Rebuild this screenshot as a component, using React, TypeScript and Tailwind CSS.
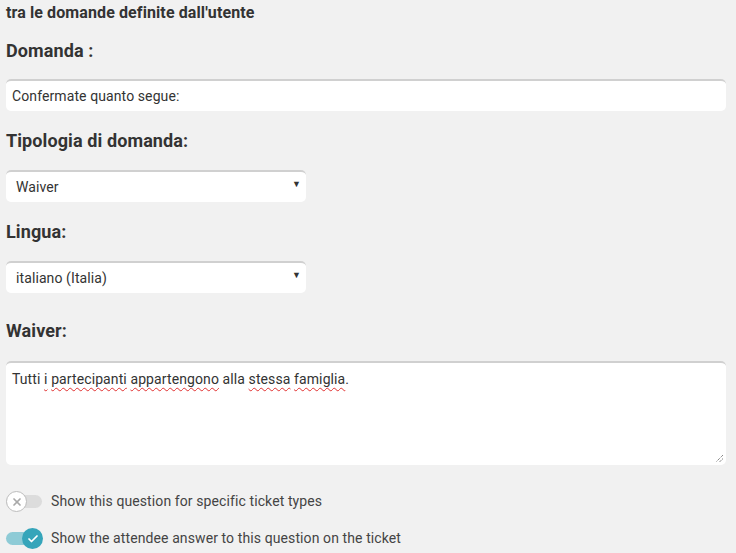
import React from 'react'
import { Check, X } from 'lucide-react'

const font = { fontFamily: 'Roboto, "Liberation Sans", sans-serif' }

const Label: React.FC<{ children: React.ReactNode; className?: string }> = ({ children, className }) => (
  <div className={`h-6 leading-6 text-[18px] font-bold text-[#333] ${className || ''}`}>{children}</div>
)

const SelectBox: React.FC<{ value: string; className?: string }> = ({ value, className }) => (
  <div
    className={`relative w-[300px] h-[32px] bg-white rounded-[5px] border-t-2 border-[#d0d0d0] flex items-center pl-[10px] text-[14px] text-[#333] ${className || ''}`}
  >
    {value}
    <span className="absolute right-[5px] top-[6px] text-[9px] text-[#333]">▼</span>
  </div>
)

const Wavy: React.FC<{ children: React.ReactNode }> = ({ children }) => (
  <span className="underline decoration-wavy decoration-[#e03030] decoration-1 underline-offset-[3px]">{children}</span>
)

const App: React.FC = () => {
  return (
    <div className="w-[736px] h-[553px] bg-[#f1f1f1] overflow-hidden px-[6px] pt-px tracking-[0.1px]" style={font}>
      <div className="h-6 leading-6 text-[16px] font-bold text-[#333]">tra le domande definite dall'utente</div>

      <Label className="mt-[14px]">Domanda :</Label>
      <div className="mt-[16px] w-[720px] h-[32px] bg-white rounded-[5px] border-t-2 border-[#d0d0d0] flex items-center pl-[6px] text-[14px] text-[#333]">
        Confermate quanto segue:
      </div>

      <Label className="mt-[18px]">Tipologia di domanda:</Label>
      <SelectBox value="Waiver" className="mt-[17px]" />

      <Label className="mt-[18px]">Lingua:</Label>
      <SelectBox value="italiano (Italia)" className="mt-[17px]" />

      <Label className="mt-[26px]">Waiver:</Label>
      <div className="relative mt-[18px] w-[720px] h-[104px] bg-white rounded-[5px] border-t-2 border-[#d0d0d0] px-[6px] pt-[7px] text-[14px] leading-[18px] text-[#333]">
        Tutti <Wavy>i</Wavy> <Wavy>partecipanti</Wavy> <Wavy>appartengono</Wavy> alla <Wavy>stessa</Wavy>{' '}
        <Wavy>famiglia</Wavy>.
        <svg className="absolute right-[2px] bottom-[2px]" width="9" height="9" viewBox="0 0 9 9">
          <path d="M8 1 L1 8 M8 4.5 L4.5 8" stroke="#555" strokeWidth="1" strokeDasharray="1 1" />
        </svg>
      </div>

      <div className="mt-[24px] h-6 flex items-center">
        <div className="relative w-[37px] h-[22px] flex items-center">
          <div className="w-[36px] h-[13px] rounded-full bg-[#dcdcdc]" />
          <div className="absolute left-0 top-px w-[21px] h-[21px] rounded-full bg-white border border-[#bdbdbd] flex items-center justify-center">
            <X size={12} strokeWidth={3.5} color="#a9a9a9" />
          </div>
        </div>
        <span className="ml-[8px] text-[14px] text-[#444]">Show this question for specific ticket types</span>
      </div>

      <div className="mt-[13px] h-6 flex items-center">
        <div className="relative w-[37px] h-[22px] flex items-center">
          <div className="w-[36px] h-[13px] rounded-full bg-[#8ecbd6]" />
          <div className="absolute left-[16px] top-px w-[21px] h-[21px] rounded-full bg-[#35a5ba] flex items-center justify-center">
            <Check size={12} strokeWidth={3.5} color="#fff" />
          </div>
        </div>
        <span className="ml-[8px] text-[14px] text-[#444]">Show the attendee answer to this question on the ticket</span>
      </div>
    </div>
  )
}

export default App
